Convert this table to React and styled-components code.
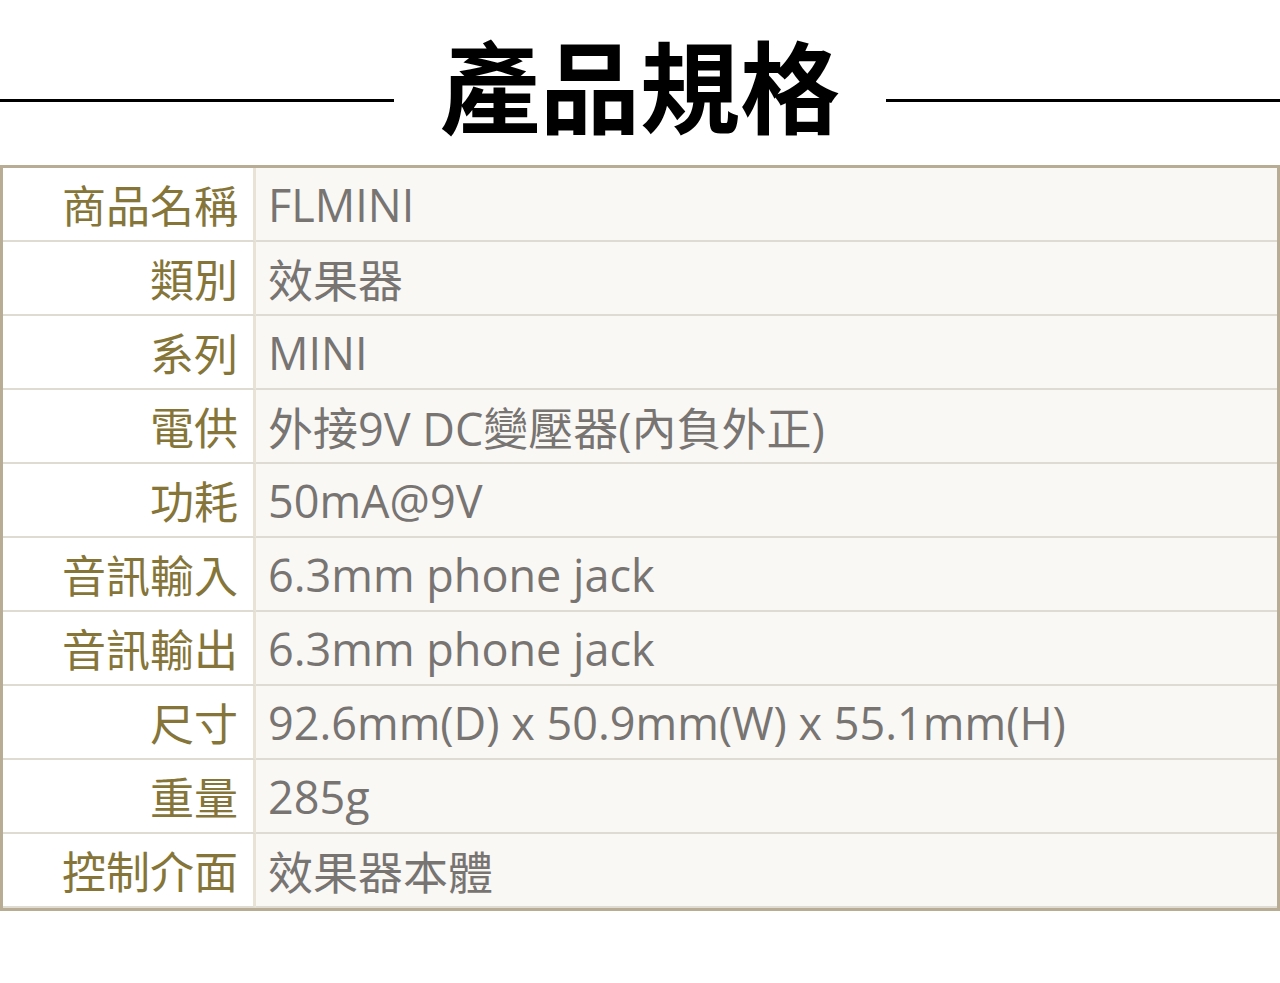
import React from 'react'
import styled, { createGlobalStyle } from 'styled-components'

const Global = createGlobalStyle`
  body {
    margin: 0;
    background: #fff;
    font-family: "Open Sans", "Noto Sans CJK TC", sans-serif;
  }
`

const Page = styled.div`
  width: 1280px;
`

const Header = styled.div`
  height: 165px;
  display: flex;
  align-items: center;
`

const Rule = styled.div`
  flex: 1;
  height: 3px;
  margin-top: 36px;
  background: #000;
`

const Title = styled.h1`
  margin: 0 46px;
  font-family: "Noto Sans CJK TC", sans-serif;
  font-weight: 700;
  font-size: 100px;
  line-height: 1;
  color: #000;
`

const Table = styled.div`
  border: 3px solid #b8ac95;
  display: grid;
  grid-template-columns: 253px 1fr;
`

const Label = styled.div`
  height: 72px;
  border-bottom: 2px solid #dedbd3;
  border-right: 3px solid #e8e3d6;
  background: #fff;
  display: flex;
  align-items: center;
  justify-content: flex-end;
  padding-right: 15px;
  font-family: "Noto Sans CJK TC", sans-serif;
  font-size: 44px;
  color: #857539;
`

const Value = styled.div`
  height: 72px;
  border-bottom: 2px solid #dedbd3;
  background: #f9f8f5;
  display: flex;
  align-items: center;
  padding-left: 12px;
  font-family: "Open Sans", "Noto Sans CJK TC", sans-serif;
  font-size: 45px;
  color: #777472;
  white-space: nowrap;
`

const specs = [
  ['商品名稱', 'FLMINI'],
  ['類別', '效果器'],
  ['系列', 'MINI'],
  ['電供', '外接9V DC變壓器(內負外正)'],
  ['功耗', '50mA@9V'],
  ['音訊輸入', '6.3mm phone jack'],
  ['音訊輸出', '6.3mm phone jack'],
  ['尺寸', '92.6mm(D) x 50.9mm(W) x 55.1mm(H)'],
  ['重量', '285g'],
  ['控制介面', '效果器本體'],
]

export default function App() {
  return (
    <Page>
      <Global />
      <Header>
        <Rule />
        <Title>產品規格</Title>
        <Rule />
      </Header>
      <Table>
        {specs.map(([k, v]) => (
          <React.Fragment key={k}>
            <Label>{k}</Label>
            <Value>{v}</Value>
          </React.Fragment>
        ))}
      </Table>
    </Page>
  )
}
